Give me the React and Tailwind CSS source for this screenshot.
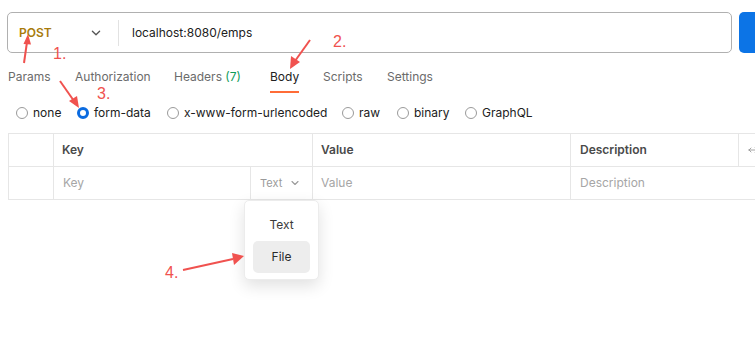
import React from "react";

const font = { fontFamily: "Inter, 'Noto Sans', sans-serif" };
const anno = { fontFamily: "'Liberation Sans', Arial, sans-serif" };

function Radio({ checked, label, className = "" }) {
  return (
    <div className={"flex items-center gap-[5px] " + className}>
      {checked ? (
        <span className="w-[12px] h-[12px] rounded-full border-[3px] border-[#0b6be0] bg-white" />
      ) : (
        <span className="w-[12px] h-[12px] rounded-full border border-[#9a9a9a] bg-white" />
      )}
      <span className="text-[12px] leading-[16px] text-[#212121]">{label}</span>
    </div>
  );
}

function Chevron({ className = "", size = 10 }) {
  return (
    <svg width={size} height={size} viewBox="0 0 10 10" className={className} fill="none">
      <path d="M2 3.5 L5 6.5 L8 3.5" stroke="currentColor" strokeWidth="1.1" strokeLinecap="round" strokeLinejoin="round" />
    </svg>
  );
}

export default function App() {
  return (
    <div className="relative w-[755px] h-[358px] bg-white overflow-hidden" style={font}>
      {/* URL bar */}
      <div className="flex pt-[12px] pl-[7px] gap-[7px]">
        <div className="w-[725px] shrink-0 h-[41px] rounded-[5px] border border-[#b0b0b0] flex items-center">
          <div className="w-[110px] h-full flex items-center pl-[11px] pr-[16px] justify-between">
            <span className="text-[12px] font-semibold text-[#a87b0c]">POST</span>
            <Chevron className="text-[#555]" size={12} />
          </div>
          <div className="w-px h-[26px] bg-[#e2e2e2]" />
          <span className="pl-[13px] text-[12px] text-[#212121]">localhost:8080/emps</span>
        </div>
        <div className="flex-1 h-[41px] rounded-l-[5px] bg-[#0c74e6]" />
      </div>

      {/* Tabs */}
      <div className="flex pl-[8px] h-[40px]">
        {[
          ["Params", 67],
          ["Authorization", 99],
          ["Headers", 96],
          ["Body", 53],
          ["Scripts", 64],
          ["Settings", 60],
        ].map(([t, w]) => (
          <div key={t} style={{ width: w }} className="flex flex-col pt-[16px]">
            <span className={"text-[12px] leading-[16px] whitespace-nowrap " + (t === "Body" ? "text-[#212121]" : "text-[#6b6b6b]")}>
              {t}
              {t === "Headers" && <span className="text-[#0f9b5a]"> (7)</span>}
            </span>
            {t === "Body" && <div className="mt-[6px] h-[2px] w-[29px] bg-[#ff6c37]" />}
          </div>
        ))}
      </div>

      {/* Radio row */}
      <div className="flex items-center mt-[10px] h-[20px] pl-[16px]">
        <Radio label="none" className="w-[61px]" />
        <Radio checked label="form-data" className="w-[90px]" />
        <Radio label="x-www-form-urlencoded" className="w-[175px]" />
        <Radio label="raw" className="w-[55px]" />
        <Radio label="binary" className="w-[68px]" />
        <Radio label="GraphQL" />
      </div>

      {/* Table */}
      <div className="mt-[10px] ml-[8px] border-t border-l border-[#e6e6e6] text-[12px]">
        <div className="flex h-[33px] border-b border-[#e6e6e6]">
          <div className="w-[45px] shrink-0 border-r border-[#e6e6e6]" />
          <div className="w-[259px] shrink-0 border-r border-[#e6e6e6] flex items-center pl-[8px] font-semibold text-[#4a4a4a]">Key</div>
          <div className="w-[258px] shrink-0 border-r border-[#e6e6e6] flex items-center pl-[8px] font-semibold text-[#4a4a4a]">Value</div>
          <div className="w-[168px] shrink-0 border-r border-[#e6e6e6] flex items-center pl-[9px] font-semibold text-[#4a4a4a]">Description</div>
          <div className="flex-1 min-w-0 flex items-center pl-[9px] overflow-hidden">
            <svg width="10" height="6" viewBox="0 0 10 6" fill="none" className="shrink-0">
              <path d="M1 3 H9 M1 3 L3 1 M1 3 L3 5 M9 3 L7 1 M9 3 L7 5" stroke="#9a9a9a" strokeWidth="0.9" strokeLinecap="round" />
            </svg>
          </div>
        </div>
        <div className="flex h-[33px] border-b border-[#e6e6e6]">
          <div className="w-[45px] shrink-0 border-r border-[#e6e6e6]" />
          <div className="w-[197px] shrink-0 border-r border-[#e6e6e6] flex items-center pl-[9px] text-[#a6a6a6]">Key</div>
          <div className="w-[62px] shrink-0 border-r border-[#e6e6e6] flex items-center pl-[9px] gap-[8px] text-[#9a9a9a] text-[11px]">
            Text <Chevron className="text-[#9a9a9a]" size={10} />
          </div>
          <div className="w-[257px] shrink-0 flex items-center pl-[8px] text-[#a6a6a6]">Value</div>
          <div className="flex-1 min-w-0 flex items-center pl-[9px] border-l border-[#e6e6e6] text-[#a6a6a6]">Description</div>
        </div>
      </div>

      {/* Dropdown */}
      <div className="absolute left-[244px] top-[200px] w-[75px] h-[80px] bg-white rounded-[5px] border border-[#ececec] shadow-[0_6px_16px_rgba(0,0,0,0.12)] flex flex-col items-center pt-[15px]">
        <span className="text-[12px] leading-[18px] text-[#3a3a3a]">Text</span>
        <div className="mt-[7px] w-[57px] h-[32px] rounded-[5px] bg-[#ededed] flex items-center justify-center text-[12px] text-[#2a2a2a]">
          File
        </div>
      </div>

      {/* Annotations */}
      <svg className="absolute inset-0 pointer-events-none" width="755" height="358" viewBox="0 0 755 358">
        <g stroke="#f0524f" strokeWidth="2" fill="#f0524f">
          <line x1="24" y1="63" x2="27" y2="42" />
          <polygon points="28,34 23.5,44 31,44.5" stroke="none" />
          <line x1="310" y1="40" x2="295" y2="61" />
          <polygon points="290,69 291,56 300,62" stroke="none" />
          <line x1="60" y1="81" x2="74" y2="101" />
          <polygon points="79,108 69,101 77,96" stroke="none" />
          <line x1="183" y1="270" x2="233" y2="259" />
          <polygon points="244,256 232,253 234,265" stroke="none" />
        </g>
      </svg>
      <span className="absolute left-[53px] top-[45px] text-[16px] leading-[18px] text-[#f0524f]" style={anno}>1.</span>
      <span className="absolute left-[333px] top-[33px] text-[16px] leading-[18px] text-[#f0524f]" style={anno}>2.</span>
      <span className="absolute left-[97px] top-[85px] text-[16px] leading-[18px] text-[#f0524f]" style={anno}>3.</span>
      <span className="absolute left-[165px] top-[264px] text-[16px] leading-[18px] text-[#f0524f]" style={anno}>4.</span>
    </div>
  );
}
